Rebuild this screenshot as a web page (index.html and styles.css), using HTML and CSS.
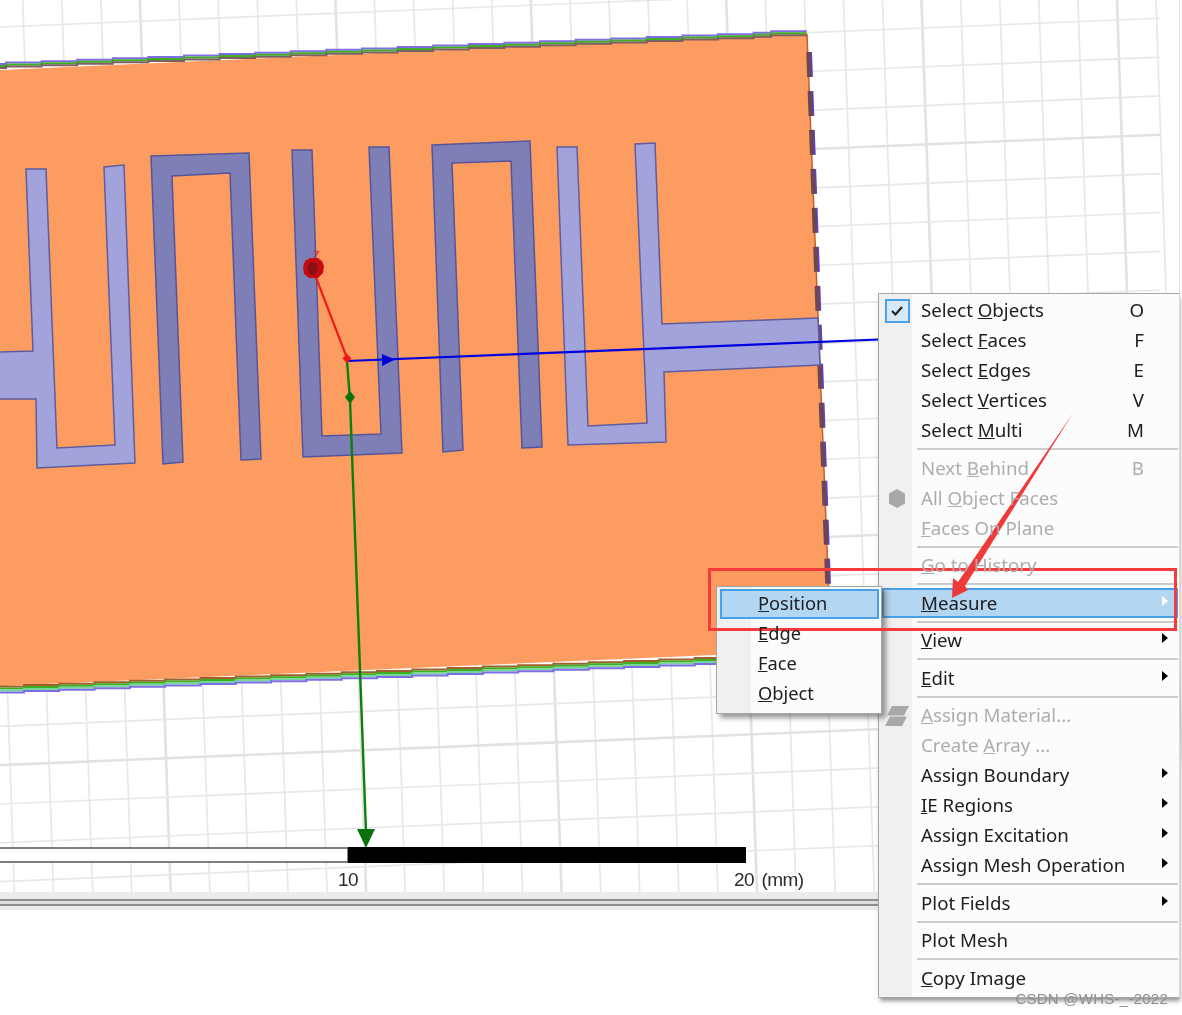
FILE: index.html
```html
<!DOCTYPE html>
<html lang="en">
<head>
<meta charset="utf-8">
<title>Measure menu</title>
<link rel="stylesheet" href="styles.css">
</head>
<body>
<div class="stage">
  <svg class="model" width="1182" height="1015" viewBox="0 0 1182 1015">
    <defs>
      <path id="top-edge" d="M-2 64h8v-1.42h35.6v-1.42h35.6v-1.42h35.6v-1.42h35.6v-1.42h35.6v-1.42h35.6v-1.42h35.6v-1.42h35.6v-1.42h35.6v-1.42h35.6v-1.42h35.6v-1.42h35.6v-1.42h35.6v-1.42h35.6v-1.42h35.6v-1.42h35.6v-1.42h35.6v-1.42h35.6v-1.42h35.6v-1.42h35.6v-1.42h35.6v-1.42h17.6v-1.42h35.6"/>
      <path id="bottom-edge" d="M-2 691h26v-1.42h35.3v-1.42h35.3v-1.42h35.3v-1.42h35.3v-1.42h35.3v-1.42h35.3v-1.42h35.3v-1.42h35.3v-1.42h35.3v-1.42h35.3v-1.42h35.3v-1.42h35.3v-1.42h35.3v-1.42h35.3v-1.42h35.3v-1.42h35.3v-1.42h35.3v-1.42h35.3v-1.42h35.3v-1.42h35.3v-1.42h35.3"/>
    </defs>

    <path class="g-thin" d="M-16.4 0l30.8 892M22.7 0l30.8 892M61.8 0l30.8 892M100.900 0l30.8 892M179 0l30.8 892M218.100 0l30.8 892M257.200 0l30.8 892M296.300 0l30.8 892M374.400 0l30.8 892M413.500 0l30.8 892M452.700 0l30.8 892M491.700 0l30.8 892M569.900 0l30.8 892M608.900 0l30.8 892M648 0l30.8 892M687.100 0l30.8 892M765.300 0l30.8 892M804.400 0l30.8 892M843.500 0l30.8 892M882.500 0l30.8 892M960.700 0l30.8 892M999.800 0l30.8 892M1038.800 0l30.8 892M1077.900 0l30.8 892M1156 0l30.8 892"/>
    <path class="g-thick" d="M139.900 0l30.8 892M335.400 0l30.8 892M530.800 0l30.8 892M726.200 0l30.8 892M921.500 0l30.8 892M1117 0l30.8 892"/>
    <path class="g-thin" d="M0 27l1160 -47.600M0 65.850l1160 -47.600M0 104.700l1160 -47.600M0 143.550l1160 -47.600M0 221.250l1160 -47.600M0 260.100l1160 -47.600M0 298.950l1160 -47.600M0 337.800l1160 -47.600M0 415.500l1160 -47.600M0 454.350l1160 -47.600M0 493.200l1160 -47.600M0 532.050l1160 -47.600M0 609.750l1160 -47.600M0 648.600l1160 -47.600M0 687.450l1160 -47.600M0 726.300l1160 -47.600M0 804l1160 -47.600M0 842.850l1160 -47.600M0 881.700l1160 -47.600"/>
    <path class="g-thick" d="M0 182.400l1160 -47.600M0 376.650l1160 -47.600M0 570.900l1160 -47.600M0 765.150l1160 -47.600"/>

    <polygon class="board" points="0,70 807,34 831,650 0,686"/>
    <use href="#top-edge" class="e-purple"/>
    <use href="#top-edge" y="2" class="e-green"/>
    <use href="#top-edge" y="4" class="e-brown"/>
    <use href="#bottom-edge" y="-4.5" class="e-brown2"/>
    <use href="#bottom-edge" y="-2.5" class="e-green"/>
    <use href="#bottom-edge" y="-0.5" class="e-mint"/>
    <use href="#bottom-edge" y="1.5" class="e-purple"/>

    <line class="edge-line" x1="807" y1="34" x2="831" y2="650"/>
    <line class="dash-purple" x1="811" y1="52" x2="830" y2="585"/>
    <line class="dash-brown" x1="808.5" y1="52" x2="827.5" y2="585"/>

    <polygon class="dark-strip" points="151,156 249,153 261,459 241,460 230,173 172,176 183,462 163,464"/>
    <polygon class="dark-strip" points="292,150 312,150 322,436 381,434 369,147 389,147 402,453 303,457"/>
    <polygon class="dark-strip" points="432,145 530,141 542,447 522,448 511,161 452,163 463,450 443,452"/>
    <polygon class="light-strip" points="-2,352 33,351 26,169 46,169 57,448 115,445 104,167 124,165 135,463 37,468 36,399 -2,399"/>
    <polygon class="light-strip" points="557,147 577,147 588,426 647,423 635,144 655,143 662,324 818,318 820,365 664,372 666,442 568,445"/>

    <line class="ax-blue" x1="347" y1="361" x2="878" y2="339.5"/>
    <polygon class="fill-blue" points="382,354 382,366 395,359.6"/>
    <polyline class="ax-green" points="347,361 350,400 366,832"/>
    <polygon class="fill-green" points="350,391 355,397 350,404 345,397"/>
    <polygon class="fill-green" points="357,829 375,829 366,848"/>
    <line class="ax-red" x1="347" y1="358" x2="315" y2="275"/>
    <polygon class="fill-red" points="347,354 351.500,358.500 347,363 342.500,358.500"/>
    <text class="z-label" x="313" y="259">Z</text>
    <polygon class="ball" points="310,258 317,258 322,261 324,266 323,273 318,278 309,278 304,274 303,267 305,261"/>
    <polygon class="ball-core" points="310,262 316,263 318,269 315,275 310,275 307,269"/>

    <rect class="bar-white" x="-2" y="848" width="350" height="14"/>
    <rect class="bar-black" x="348" y="847" width="398" height="16"/>
    <text class="scale" x="338" y="886">10</text>
    <text class="scale" x="734" y="886">20 (mm)</text>

    <rect class="band" x="0" y="892" width="880" height="7"/>
    <rect class="rule-dark" x="0" y="899" width="880" height="2"/>
    <rect class="rule-light" x="0" y="901" width="880" height="3"/>
    <rect class="rule-dark" x="0" y="904" width="880" height="2"/>
    <rect class="band" x="0" y="906" width="880" height="4"/>
    <line class="far-rule" x1="1179.500" y1="0" x2="1179.500" y2="293"/>
  </svg>

  <div class="menu main-menu">
    <div class="row"><span class="gut"><span class="check"><svg width="14" height="12" viewBox="0 0 14 12"><path class="tick" d="M2 6l3.500 3.500L12 2"/></svg></span></span><span class="label">Select <u>O</u>bjects</span><span class="key">O</span></div>
    <div class="row"><span class="gut"></span><span class="label">Select <u>F</u>aces</span><span class="key">F</span></div>
    <div class="row"><span class="gut"></span><span class="label">Select <u>E</u>dges</span><span class="key">E</span></div>
    <div class="row"><span class="gut"></span><span class="label">Select <u>V</u>ertices</span><span class="key">V</span></div>
    <div class="row"><span class="gut"></span><span class="label">Select <u>M</u>ulti</span><span class="key">M</span></div>
    <div class="sep"></div>
    <div class="row off"><span class="gut"></span><span class="label">Next <u>B</u>ehind</span><span class="key">B</span></div>
    <div class="row off"><span class="gut"><svg width="16" height="19" viewBox="0 0 16 19"><polygon class="icon-gray" points="8,0 16,4.500 16,14.500 8,19 0,14.500 0,4.500"/></svg></span><span class="label">All <u>O</u>bject Faces</span></div>
    <div class="row off"><span class="gut"></span><span class="label"><u>F</u>aces On Plane</span></div>
    <div class="sep"></div>
    <div class="row off"><span class="gut"></span><span class="label"><u>G</u>o to History</span></div>
    <div class="sep"></div>
    <div class="row hot"><span class="gut"></span><span class="label"><u>M</u>easure</span><span class="arrow white"></span></div>
    <div class="sep"></div>
    <div class="row"><span class="gut"></span><span class="label"><u>V</u>iew</span><span class="arrow"></span></div>
    <div class="sep"></div>
    <div class="row"><span class="gut"></span><span class="label"><u>E</u>dit</span><span class="arrow"></span></div>
    <div class="sep"></div>
    <div class="row off"><span class="gut"><svg width="24" height="20" viewBox="0 0 24 20"><polygon class="icon-gray" points="7,0 24,0 19,9.500 2,9.500"/><polygon class="icon-gray" points="5,10.500 22,10.500 17,20 0,20"/></svg></span><span class="label"><u>A</u>ssign Material...</span></div>
    <div class="row off"><span class="gut"></span><span class="label">Create <u>A</u>rray ...</span></div>
    <div class="row"><span class="gut"></span><span class="label">Assign Boundary</span><span class="arrow"></span></div>
    <div class="row"><span class="gut"></span><span class="label"><u>I</u>E Regions</span><span class="arrow"></span></div>
    <div class="row"><span class="gut"></span><span class="label">Assign Excitation</span><span class="arrow"></span></div>
    <div class="row"><span class="gut"></span><span class="label">Assign Mesh Operation</span><span class="arrow"></span></div>
    <div class="sep"></div>
    <div class="row"><span class="gut"></span><span class="label">Plot Fields</span><span class="arrow"></span></div>
    <div class="sep"></div>
    <div class="row"><span class="gut"></span><span class="label">Plot Mesh</span></div>
    <div class="sep"></div>
    <div class="row"><span class="gut"></span><span class="label"><u>C</u>opy Image</span></div>
  </div>

  <div class="menu sub-menu">
    <div class="row hot sub-hot"><span class="gut"></span><span class="label"><u>P</u>osition</span></div>
    <div class="row"><span class="gut"></span><span class="label"><u>E</u>dge</span></div>
    <div class="row"><span class="gut"></span><span class="label"><u>F</u>ace</span></div>
    <div class="row"><span class="gut"></span><span class="label"><u>O</u>bject</span></div>
  </div>

  <svg class="annotation" width="1182" height="1015" viewBox="0 0 1182 1015">
    <rect class="note-box" x="709.500" y="569.500" width="466" height="60"/>
    <polygon class="note-arrow" points="1073,413 965,586 968,590 952,598 953,578 958,582"/>
  </svg>

  <div class="watermark">CSDN @WHS-_-2022</div>
</div>
</body>
</html>
```
FILE: styles.css
```css
* { box-sizing: border-box; }
html, body { margin: 0; padding: 0; background: #fff; }
body { width: 1182px; height: 1015px; overflow: hidden; }

.stage {
  position: relative;
  width: 1182px;
  height: 1015px;
  overflow: hidden;
  background: #fff;
  filter: blur(0.45px);
  font-family: "Noto Sans", "Open Sans", "Liberation Sans", sans-serif;
}

.model, .annotation { display: block; }
.annotation { position: absolute; left: 0; top: 0; pointer-events: none; }

.g-thin { fill: none; stroke: #e8e8e8; stroke-width: 1.7; }
.g-thick { fill: none; stroke: #e2e2e2; stroke-width: 2.6; }

.board { fill: #fd9c60; }
.e-purple, .e-green, .e-brown, .e-brown2, .e-mint { fill: none; stroke-width: 2; }
.e-purple { stroke: #7d6ee6; }
.e-green { stroke: #3fae22; }
.e-brown { stroke: #7c5f60; }
.e-brown2 { stroke: #a0602c; }
.e-mint { stroke: #74d59a; }

.edge-line { stroke: #c25f26; stroke-width: 1.5; }
.dash-brown { stroke: #6c4750; stroke-width: 4.5; stroke-dasharray: 25 14; }
.dash-purple { stroke: #5b3be6; stroke-width: 2; stroke-dasharray: 25 14; }

.dark-strip { fill: #7f7fb8; stroke: #55559b; stroke-width: 1.5; }
.light-strip { fill: #a3a3dc; stroke: #5d5da0; stroke-width: 1.5; }

.ax-blue { stroke: #0000e0; stroke-width: 2.2; }
.fill-blue { fill: #0000d8; }
.ax-green { fill: none; stroke: #0b800b; stroke-width: 2.4; }
.fill-green { fill: #0b720b; }
.ax-red { stroke: #f21a1a; stroke-width: 2.2; }
.fill-red { fill: #f21212; }
.ball { fill: #c40c10; }
.ball-core { fill: #8a0f14; }
.z-label { fill: #f01818; font: 11px "Liberation Sans", sans-serif; }

.bar-white { fill: #fff; stroke: #555; stroke-width: 1.5; }
.bar-black { fill: #000; }
.scale { fill: #2c2c2c; font: 19px "Liberation Sans", sans-serif; letter-spacing: -0.6px; word-spacing: 3px; }

.band { fill: #ececec; }
.rule-dark { fill: #8e8e8e; }
.rule-light { fill: #dedede; }
.far-rule { stroke: #e6e6e6; stroke-width: 1; }

.menu {
  position: absolute;
  border: 1.5px solid #a6a6a6;
  background: linear-gradient(90deg, #f0f0f0 33px, #fcfcfc 33px);
  box-shadow: 4px 4px 5px rgba(70, 70, 70, 0.55);
  color: #202020;
  font-size: 18.7px;
}
.main-menu {
  left: 878px;
  top: 293px;
  width: 302px;
  height: 705px;
  padding-top: 1.5px;
  border-right-color: #d8d8d8;
  box-shadow: 1px 4px 4px -1px rgba(70, 70, 70, 0.55);
}
.sub-menu {
  left: 716px;
  top: 585.5px;
  width: 166px;
  height: 128px;
  padding: 2.5px 1.5px;
  background: linear-gradient(90deg, #f0f0f0 34px, #fcfcfc 34px);
  font-size: 18.3px;
}

.row {
  position: relative;
  display: flex;
  align-items: center;
  height: 30px;
}
.gut {
  position: relative;
  z-index: 1;
  display: flex;
  align-items: center;
  justify-content: center;
  width: 33px;
  flex: none;
  padding-left: 3px;
}
.label {
  position: relative;
  top: -1px;
  z-index: 1;
  padding-left: 9px;
  white-space: nowrap;
}
.key {
  position: relative;
  top: -1px;
  z-index: 1;
  margin-left: auto;
  margin-right: 35px;
}
.arrow {
  position: relative;
  z-index: 1;
  margin-left: auto;
  margin-right: 11px;
  margin-top: -5px;
  width: 0;
  height: 0;
  border-left: 6px solid #000;
  border-top: 5px solid transparent;
  border-bottom: 5px solid transparent;
}
.arrow.white { border-left-color: #fff; }
.off { color: #adadad; }
.sep {
  display: flex;
  align-items: center;
  height: 7.5px;
  padding-left: 38px;
  padding-right: 1px;
}
.sep::before {
  content: "";
  flex: 1;
  height: 2px;
  background: #cbcbcb;
}
.hot::before {
  content: "";
  position: absolute;
  left: 3px;
  right: 1px;
  top: 0;
  bottom: 0;
  background: #b3d6f2;
  border: 2px solid #4aa0e4;
}
.sub-hot::before { left: 1px; right: 1px; }
.sub-menu .gut { width: 34px; }
.sub-menu .label { top: -2px; padding-left: 5.5px; }

.check {
  display: flex;
  align-items: center;
  justify-content: center;
  width: 25px;
  height: 24px;
  border: 2px solid #4aa0e4;
  background: #d6e9f9;
}
.tick { fill: none; stroke: #222; stroke-width: 2.2; }
.icon-gray { fill: #a8a8a8; }

.note-box { fill: none; stroke: #f53b3b; stroke-width: 3; }
.note-arrow { fill: #ef3a3a; }

.watermark {
  position: absolute;
  right: 14px;
  top: 990px;
  color: #8c8c8c;
  font: 15px "Liberation Sans", sans-serif;
  letter-spacing: 0.25px;
  white-space: nowrap;
}
```
